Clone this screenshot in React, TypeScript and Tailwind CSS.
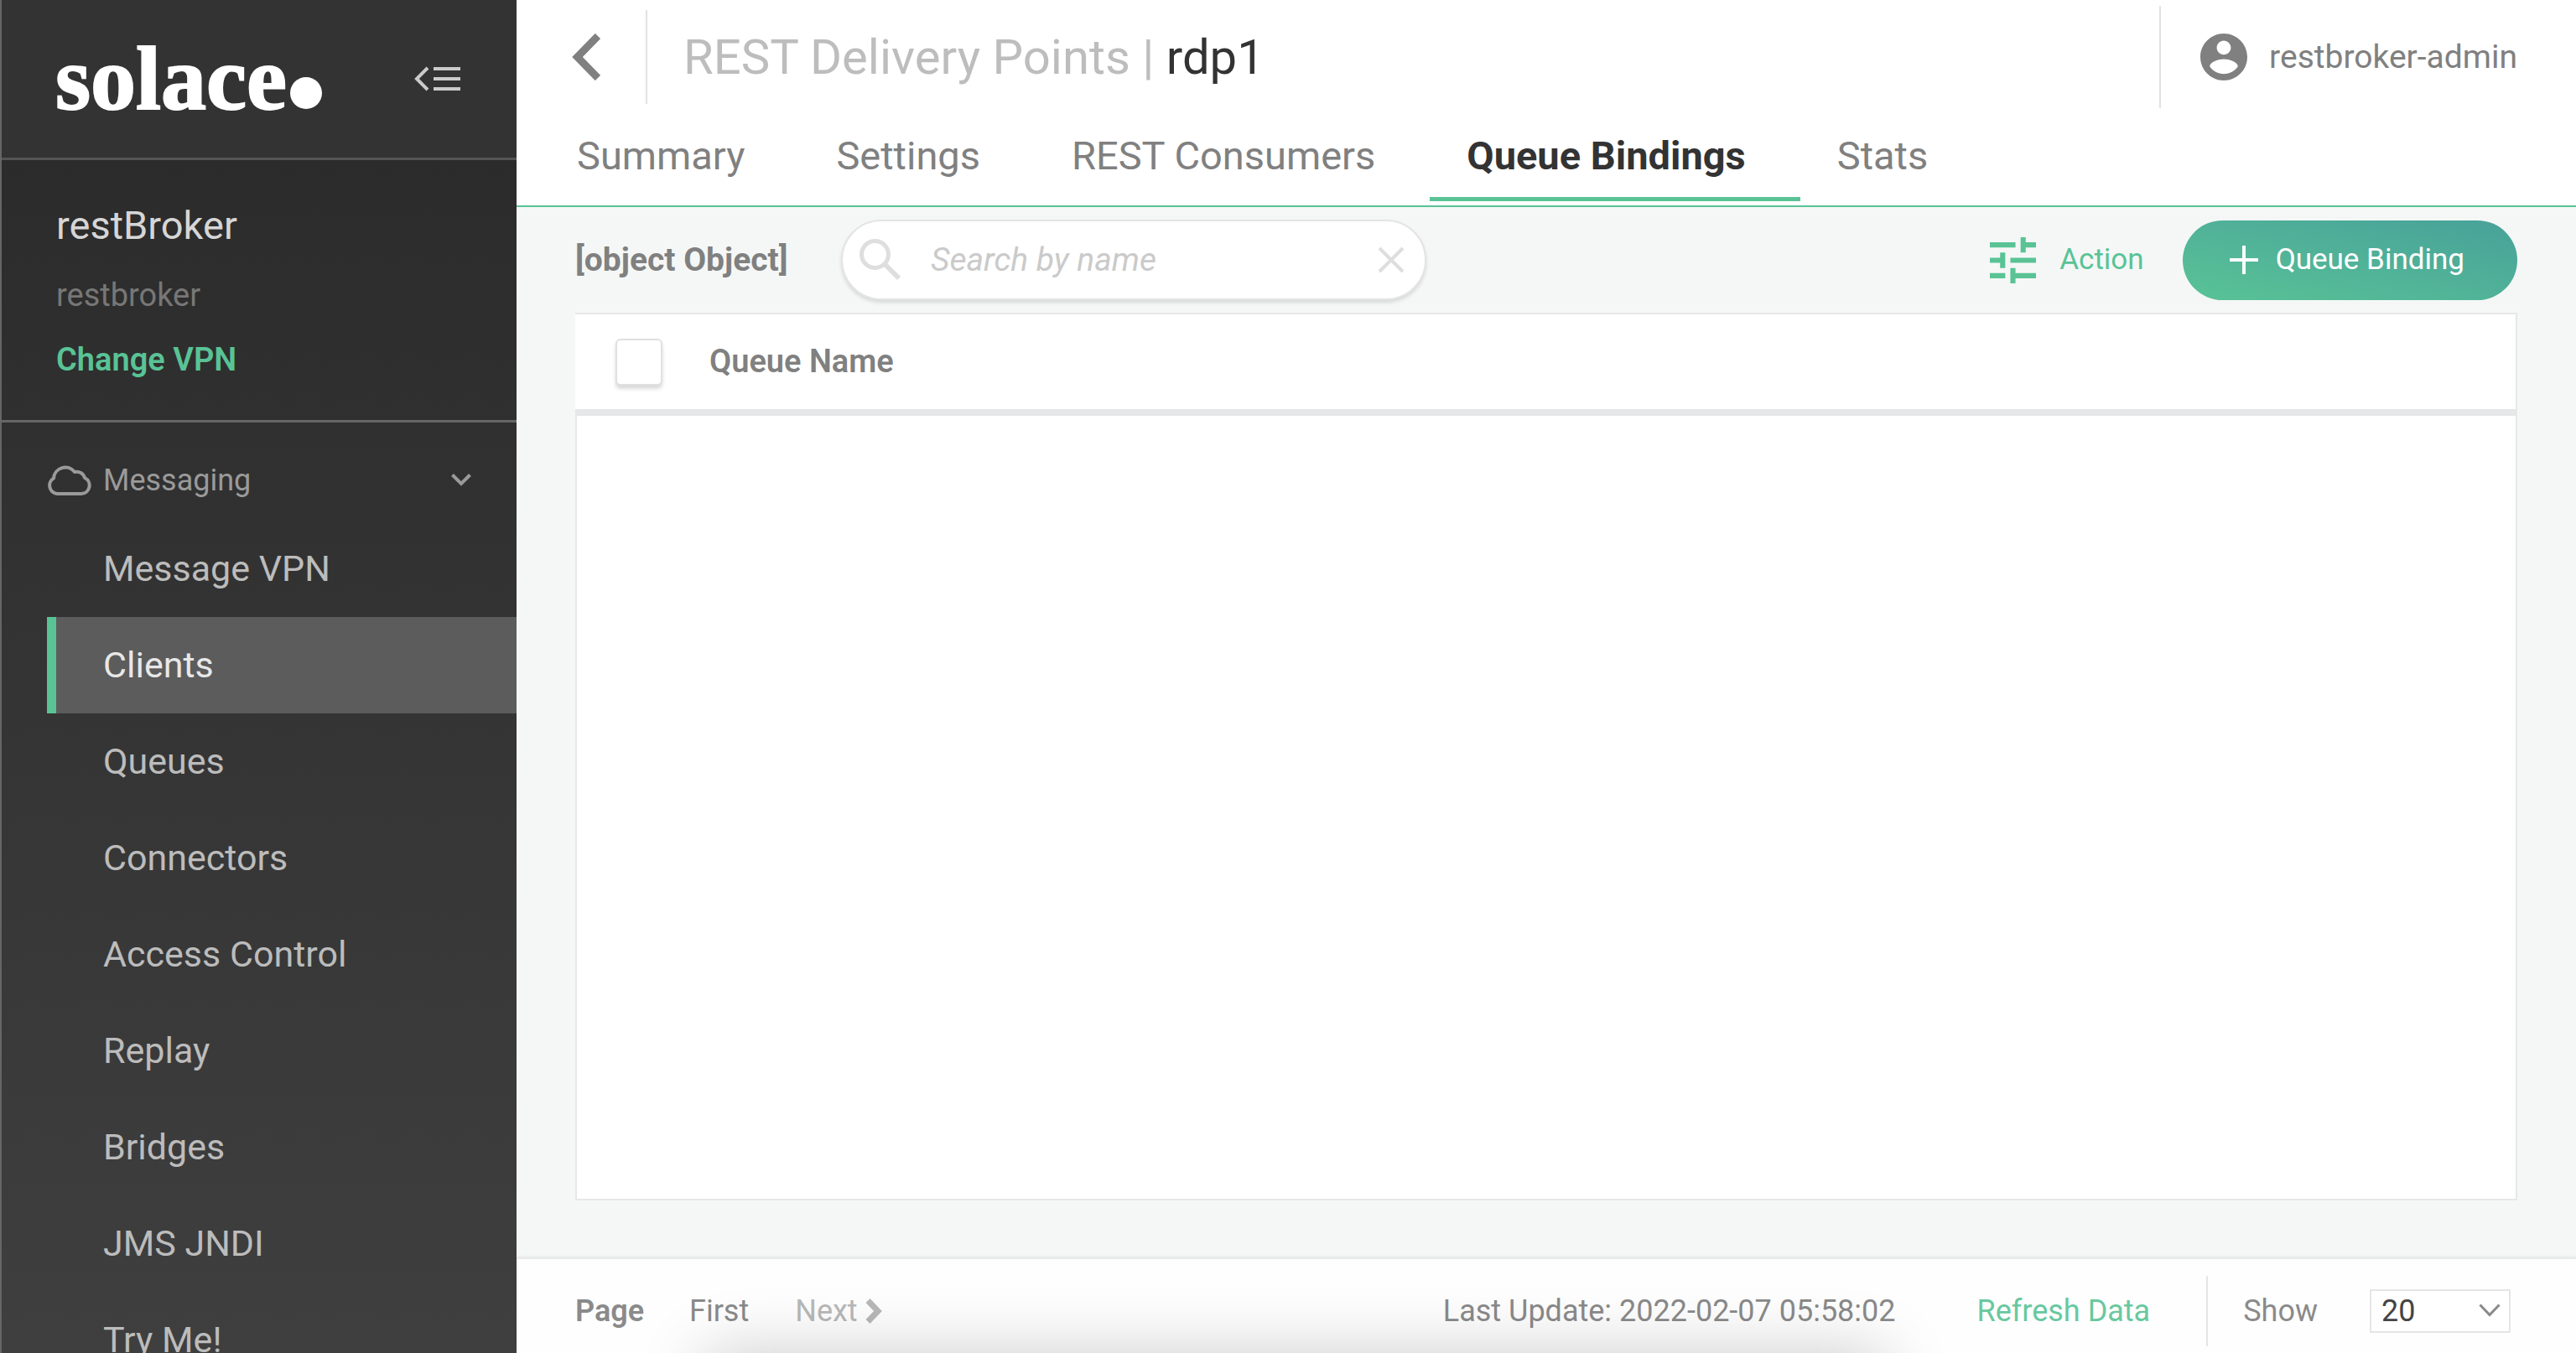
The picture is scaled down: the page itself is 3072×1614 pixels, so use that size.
import { useState } from "react";

const navItems = [
  "Message VPN",
  "Clients",
  "Queues",
  "Connectors",
  "Access Control",
  "Replay",
  "Bridges",
  "JMS JNDI",
  "Try Me!",
];

const tabs = ["Summary", "Settings", "REST Consumers", "Queue Bindings", "Stats"];

function CollapseIcon() {
  return (
    <svg width="56" height="30" viewBox="0 0 56 30" fill="none" stroke="#cbcbcb" strokeWidth="4" aria-hidden="true">
      <path d="M16 2 3 15l13 13" />
      <path d="M23 3h32M23 15h32M23 27h32" />
    </svg>
  );
}

function CloudIcon() {
  return (
    <svg width="53" height="36" viewBox="0 0 53 36" fill="none" stroke="#9a9a9a" strokeWidth="4" strokeLinejoin="round" aria-hidden="true">
      <path d="M12 34H41A10 10 0 0 0 45 15A10 10 0 0 0 33 8A14 14 0 0 0 8 15.5A10 10 0 0 0 12 34Z" />
    </svg>
  );
}

function Sidebar() {
  return (
    <aside className="flex w-[616px] shrink-0 flex-col overflow-hidden border-l-2 border-[#666] bg-linear-to-b from-[#292929] to-[#3f3f3f]">
      <div className="flex h-[191px] shrink-0 items-center justify-between border-b-3 border-[#555] bg-[#333] pr-[66px] pl-16">
        <div className="flex items-end gap-1 text-white">
          <span className="font-['Liberation_Serif',serif] text-[108px] leading-[108px] font-bold [-webkit-text-stroke:2px_#fff]">
            solace
          </span>
          <span className="mb-[18px] size-[38px] rounded-full bg-white" />
        </div>
        <button type="button" aria-label="Collapse menu">
          <CollapseIcon />
        </button>
      </div>

      <div className="flex shrink-0 flex-col items-start gap-[29px] border-b-3 border-[#666] py-12 pl-[65px]">
        <h2 className="text-[47px] leading-[60px] text-[#d6d6d6]">restBroker</h2>
        <p className="text-[38px] leading-[48px] text-[#777]">restbroker</p>
        <a href="#vpn" className="text-[38px] leading-[48px] font-semibold text-[#59c396]">
          Change VPN
        </a>
      </div>

      <nav className="pl-[54px]">
        <button type="button" className="flex h-[117px] w-full items-center gap-[14px] pt-5 pr-[54px] text-[36px] text-[#9a9a9a]">
          <CloudIcon />
          <span className="flex-1 text-left">Messaging</span>
          <svg width="24" height="15" viewBox="0 0 24 15" fill="none" stroke="#9a9a9a" strokeWidth="4" aria-hidden="true">
            <path d="M1.500 1.500 12 12 22.500 1.500" />
          </svg>
        </button>
        <ul>
          {navItems.map((item) => (
            <li key={item}>
              <a
                href="#nav"
                className={
                  item === "Clients"
                    ? "flex h-[115px] items-center border-l-11 border-[#59c396] bg-[#5c5c5c] pl-14 text-[43px] text-[#e8e8e8]"
                    : "flex h-[115px] items-center border-l-11 border-transparent pl-14 text-[43px] text-[#bcbcbc]"
                }
              >
                {item}
              </a>
            </li>
          ))}
        </ul>
      </nav>
    </aside>
  );
}

function Header() {
  return (
    <header className="shrink-0 border-b-2 border-[#59c396] bg-white">
      <div className="flex h-[136px] items-center pr-[70px] pl-[66px]">
        <button type="button" aria-label="Back">
          <svg width="34" height="56" viewBox="0 0 34 56" fill="none" stroke="#808080" strokeWidth="9" aria-hidden="true">
            <path d="M31 3 6.500 28 31 53" />
          </svg>
        </button>
        <div className="ml-[54px] h-28 w-[2px] bg-[#e2e2e2]" />
        <h1 className="ml-[43px] flex-1 text-[58px] whitespace-pre text-[#333]">
          <span className="text-[#bdbdbd]">REST Delivery Points | </span>
          rdp1
        </h1>
        <div className="h-[122px] w-[2px] bg-[#e2e2e2]" />
        <button type="button" className="ml-[47px] flex items-center gap-[26px] text-[39px] text-[#808080]">
          <svg width="56" height="56" viewBox="2 2 20 20" fill="#808080" aria-hidden="true">
            <path d="M12 2C6.480 2 2 6.480 2 12s4.480 10 10 10 10-4.480 10-10S17.520 2 12 2zm0 3c1.660 0 3 1.340 3 3s-1.340 3-3 3-3-1.340-3-3 1.340-3 3-3zm0 14.200c-2.500 0-4.710-1.280-6-3.220.03-1.990 4-3.080 6-3.080 1.990 0 5.970 1.090 6 3.080-1.290 1.940-3.500 3.220-6 3.220z" />
          </svg>
          restbroker-admin
        </button>
      </div>
      <nav className="flex pb-[5px] pl-7">
        {tabs.map((tab) => (
          <a
            key={tab}
            href="#tab"
            className={
              tab === "Queue Bindings"
                ? "flex h-[104px] items-center border-b-5 border-[#59c396] pt-[2px] pr-[65px] pl-[44px] text-[47px] font-bold text-[#333]"
                : "flex h-[104px] items-center border-b-5 border-transparent pt-[2px] pr-[65px] pl-[44px] text-[47px] text-[#808080]"
            }
          >
            {tab}
          </a>
        ))}
      </nav>
    </header>
  );
}

function Toolbar() {
  const [query, setQuery] = useState("");
  return (
    <div className="flex h-[126px] shrink-0 items-center">
      <label htmlFor="search" className="w-[317px] text-[39px] font-bold text-[#808080]">
        [object Object]
      </label>
      <div className="flex h-24 w-[698px] items-center rounded-full border-2 border-[#e4e4e4] bg-white pr-6 pl-5 shadow-[0_3px_4px_rgba(0,0,0,0.12)]">
        <svg width="50" height="50" viewBox="0 0 50 50" fill="none" stroke="#dedede" aria-hidden="true">
          <circle cx="18.500" cy="18.500" r="16" strokeWidth="5" />
          <path d="m30 30 17 17" strokeWidth="6" />
        </svg>
        <input
          id="search"
          value={query}
          onChange={(e) => setQuery(e.target.value)}
          placeholder="Search by name"
          className="ml-[35px] min-w-0 flex-1 text-[39px] text-[#333] italic outline-none placeholder:text-[#cacaca]"
        />
        <button type="button" aria-label="Clear search" onClick={() => setQuery("")}>
          <svg width="32" height="32" viewBox="0 0 32 32" fill="none" stroke="#dedede" strokeWidth="4" aria-hidden="true">
            <path d="m2 2 28 28M30 2 2 30" />
          </svg>
        </button>
      </div>
      <button type="button" className="mr-[46px] ml-auto flex items-center gap-7 text-[35px] text-[#59c396]">
        <svg width="55" height="55" viewBox="3 3 18 18" fill="#59c396" aria-hidden="true">
          <path d="M3 17v2h6v-2H3zM3 5v2h10V5H3zm10 16v-2h8v-2h-8v-2h-2v6h2zM7 9v2H3v2h4v2h2V9H7zm14 4v-2H11v2h10zm-6-4h2V7h4V5h-4V3h-2v6z" />
        </svg>
        Action
      </button>
      <button
        type="button"
        className="flex h-[95px] items-center gap-[21px] rounded-full bg-linear-to-tr from-[#59c396] to-[#48a199] pr-[63px] pl-14 text-[35px] text-white"
      >
        <svg width="34" height="34" viewBox="0 0 34 34" fill="none" stroke="#fff" strokeWidth="4" aria-hidden="true">
          <path d="M17 0v34M0 17h34" />
        </svg>
        Queue Binding
      </button>
    </div>
  );
}

function QueueTable() {
  return (
    <div className="flex flex-1 flex-col border-t-2 border-r-2 border-[#e6e7e8] bg-white">
      <table className="w-full">
        <thead>
          <tr className="h-[117px] border-b-8 border-[#e6e7e8]">
            <th className="w-40 pl-12 text-left">
              <input
                type="checkbox"
                aria-label="Select all queues"
                className="block h-14 w-14 appearance-none rounded-md border-2 border-[#e0e0e0] bg-white shadow-[0_4px_4px_rgba(0,0,0,0.15)]"
              />
            </th>
            <th className="text-left text-[38px] font-semibold text-[#808080]">Queue Name</th>
          </tr>
        </thead>
        <tbody />
      </table>
      <div className="flex-1 border-b-2 border-l-2 border-[#e6e8e8]" />
    </div>
  );
}

function Footer() {
  return (
    <footer className="flex h-[114px] shrink-0 items-center border-t-2 border-[#e8eaea] bg-[#fefefe] pt-3 pr-[78px] pl-[70px] text-[36px] text-[#8a8a8a] shadow-[0_-1px_3px_rgba(0,0,0,0.06)]">
      <span className="w-[136px] font-semibold">Page</span>
      <button type="button" className="mr-[55px]">
        First
      </button>
      <button type="button" disabled className="flex items-center gap-[9px] text-[#b8b8b8]">
        Next
        <svg width="20" height="30" viewBox="0 0 20 30" fill="none" stroke="#b8b8b8" strokeWidth="7" aria-hidden="true">
          <path d="M3 2.500 15 15 3 27.500" />
        </svg>
      </button>
      <span className="mr-[97px] ml-auto">Last Update: 2022-02-07 05:58:02</span>
      <button type="button" className="text-[#68c89f]">
        Refresh Data
      </button>
      <div className="mr-[42px] ml-[67px] h-[84px] w-[2px] bg-[#e5e5e5]" />
      <label htmlFor="page-size">Show</label>
      <div className="relative ml-[62px]">
        <select
          id="page-size"
          defaultValue="20"
          className="h-[52px] w-[168px] appearance-none border-2 border-[#e5e5e5] bg-white pl-3 text-[36px] leading-[46px] text-[#444]"
        >
          <option>20</option>
          <option>50</option>
          <option>100</option>
        </select>
        <svg
          className="pointer-events-none absolute top-[18px] right-3"
          width="26"
          height="16"
          viewBox="0 0 26 16"
          fill="none"
          stroke="#8a8a8a"
          strokeWidth="3"
          aria-hidden="true"
        >
          <path d="m1.500 1.500 11.500 12 11.500-12" />
        </svg>
      </div>
    </footer>
  );
}

export default function App() {
  return (
    <div className="relative flex h-screen overflow-hidden bg-[#f5f7f6] font-[Roboto,sans-serif]">
      <Sidebar />
      <main className="flex min-w-0 flex-1 flex-col">
        <Header />
        <section className="flex flex-1 flex-col px-[70px] pb-[68px]">
          <Toolbar />
          <QueueTable />
        </section>
        <Footer />
      </main>
      <div className="pointer-events-none absolute top-full right-[822px] left-[840px] h-40 shadow-[0_0_80px_rgba(0,0,0,0.2)]" />
    </div>
  );
}
